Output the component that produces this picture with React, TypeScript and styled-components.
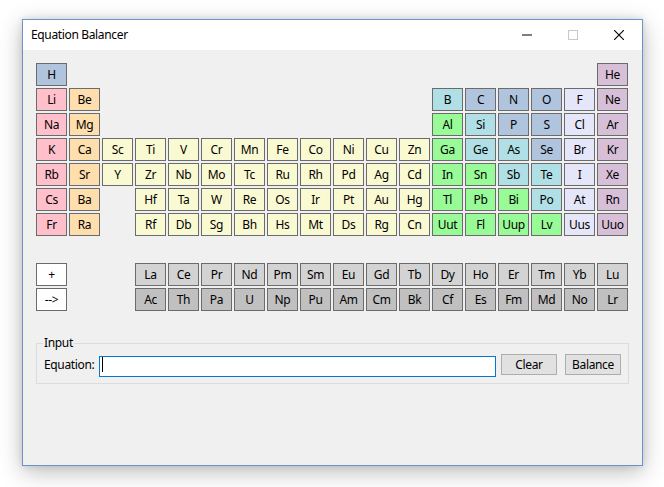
import React from "react";
import styled, { createGlobalStyle } from "styled-components";

const GlobalStyle = createGlobalStyle`
  html, body { margin: 0; padding: 0; background: #ffffff; }
  body { font-family: "Noto Sans", "Segoe UI", sans-serif; color: #000; letter-spacing: -0.35px; }
  * { box-sizing: border-box; }
`;

const Page = styled.div`
  width: 664px;
  height: 487px;
  padding: 19px 0 0 22px;
  overflow: hidden;
`;

const Window = styled.div`
  width: 621px;
  height: 447px;
  border: 1px solid #6a93c9;
  background: #f0f0f0;
  box-shadow: 0 6px 22px rgba(0, 0, 0, 0.26), 0 0 7px rgba(0, 0, 0, 0.12);
  display: flex;
  flex-direction: column;
`;

const TitleBar = styled.div`
  height: 30px;
  background: #ffffff;
  display: flex;
  align-items: center;
  padding-left: 8px;
`;

const Title = styled.div`
  flex: 1;
  font-size: 12px;
  line-height: 16px;
`;

const CaptionButton = styled.div`
  width: 46px;
  height: 30px;
  display: flex;
  align-items: center;
  justify-content: center;
`;

const Client = styled.div`
  flex: 1;
  padding: 13px 0 0 13px;
  display: flex;
  flex-direction: column;
`;

const Table = styled.div`
  display: grid;
  grid-template-columns: repeat(18, 31px);
  grid-template-rows: repeat(10, 23px);
  gap: 2px;
`;

const Cell = styled.div<{ $bg: string; $col: number; $row: number }>`
  grid-column: ${(p) => p.$col};
  grid-row: ${(p) => p.$row};
  border: 1px solid #6b6b6b;
  background: ${(p) => p.$bg};
  display: flex;
  align-items: center;
  justify-content: center;
  font-size: 12px;
  line-height: 16px;
  color: #000;
`;

const GroupBox = styled.div`
  position: relative;
  margin-top: 32px;
  width: 593px;
  height: 41px;
  border: 1px solid #dcdcdc;
  padding: 10px 0 0 7px;
`;

const GroupTitle = styled.span`
  position: absolute;
  top: -9px;
  left: 6px;
  padding: 0 1px;
  background: #f0f0f0;
  font-size: 12px;
  line-height: 16px;
`;

const Row = styled.div`
  display: flex;
  align-items: center;
`;

const Label = styled.label`
  width: 55px;
  font-size: 12px;
  line-height: 16px;
`;

const InputWrap = styled.div`
  position: relative;
  width: 397px;
  height: 21px;
`;

const TextInput = styled.input`
  width: 100%;
  height: 100%;
  border: 1px solid #0078d7;
  background: #fff;
  outline: none;
  padding: 0 2px;
  font-family: inherit;
  font-size: 12px;
  caret-color: transparent;
`;

const Caret = styled.span`
  position: absolute;
  left: 3px;
  top: 3px;
  width: 1px;
  height: 15px;
  background: #000;
  pointer-events: none;
`;

const Button = styled.button<{ $gap: number }>`
  margin-left: ${(p) => p.$gap}px;
  width: 56px;
  height: 21px;
  border: 1px solid #adadad;
  background: #e1e1e1;
  font-family: inherit;
  font-size: 12px;
  line-height: 16px;
  letter-spacing: -0.35px;
  color: #000;
  padding: 0;
`;

const C = {
  h: "#b0c4de",
  alkali: "#ffc0cb",
  earth: "#ffdead",
  trans: "#fafad2",
  metalloid: "#b0e0e6",
  nonmetal: "#b0c4de",
  halogen: "#e6e6fa",
  noble: "#d8bfd8",
  post: "#98fb98",
  lan: "#d3d3d3",
  act: "#c0c0c0",
  op: "#ffffff",
};

type El = [string, number, number, string];

const els: El[] = [];

const add = (row: number, startCol: number, list: [string, string][]) => {
  list.forEach(([s, c], i) => els.push([s, startCol + i, row, c]));
};

add(1, 1, [["H", C.h]]);
add(1, 18, [["He", C.noble]]);
add(2, 1, [["Li", C.alkali], ["Be", C.earth]]);
add(2, 13, [["B", C.metalloid], ["C", C.nonmetal], ["N", C.nonmetal], ["O", C.nonmetal], ["F", C.halogen], ["Ne", C.noble]]);
add(3, 1, [["Na", C.alkali], ["Mg", C.earth]]);
add(3, 13, [["Al", C.post], ["Si", C.metalloid], ["P", C.nonmetal], ["S", C.nonmetal], ["Cl", C.halogen], ["Ar", C.noble]]);
add(4, 1, [
  ["K", C.alkali], ["Ca", C.earth], ["Sc", C.trans], ["Ti", C.trans], ["V", C.trans], ["Cr", C.trans],
  ["Mn", C.trans], ["Fe", C.trans], ["Co", C.trans], ["Ni", C.trans], ["Cu", C.trans], ["Zn", C.trans],
  ["Ga", C.post], ["Ge", C.metalloid], ["As", C.metalloid], ["Se", C.nonmetal], ["Br", C.halogen], ["Kr", C.noble],
]);
add(5, 1, [
  ["Rb", C.alkali], ["Sr", C.earth], ["Y", C.trans], ["Zr", C.trans], ["Nb", C.trans], ["Mo", C.trans],
  ["Tc", C.trans], ["Ru", C.trans], ["Rh", C.trans], ["Pd", C.trans], ["Ag", C.trans], ["Cd", C.trans],
  ["In", C.post], ["Sn", C.post], ["Sb", C.metalloid], ["Te", C.metalloid], ["I", C.halogen], ["Xe", C.noble],
]);
add(6, 1, [["Cs", C.alkali], ["Ba", C.earth]]);
add(6, 4, [
  ["Hf", C.trans], ["Ta", C.trans], ["W", C.trans], ["Re", C.trans], ["Os", C.trans], ["Ir", C.trans],
  ["Pt", C.trans], ["Au", C.trans], ["Hg", C.trans], ["Tl", C.post], ["Pb", C.post], ["Bi", C.post],
  ["Po", C.metalloid], ["At", C.halogen], ["Rn", C.noble],
]);
add(7, 1, [["Fr", C.alkali], ["Ra", C.earth]]);
add(7, 4, [
  ["Rf", C.trans], ["Db", C.trans], ["Sg", C.trans], ["Bh", C.trans], ["Hs", C.trans], ["Mt", C.trans],
  ["Ds", C.trans], ["Rg", C.trans], ["Cn", C.trans], ["Uut", C.post], ["Fl", C.post], ["Uup", C.post],
  ["Lv", C.post], ["Uus", C.halogen], ["Uuo", C.noble],
]);
add(9, 1, [["+", C.op]]);
add(9, 4, ["La", "Ce", "Pr", "Nd", "Pm", "Sm", "Eu", "Gd", "Tb", "Dy", "Ho", "Er", "Tm", "Yb", "Lu"].map((s) => [s, C.lan] as [string, string]));
add(10, 1, [["-->", C.op]]);
add(10, 4, ["Ac", "Th", "Pa", "U", "Np", "Pu", "Am", "Cm", "Bk", "Cf", "Es", "Fm", "Md", "No", "Lr"].map((s) => [s, C.act] as [string, string]));

const MinIcon = () => (
  <svg width="10" height="10" viewBox="0 0 10 10">
    <rect x="0" y="4.5" width="10" height="1" fill="#000" />
  </svg>
);
const MaxIcon = () => (
  <svg width="10" height="10" viewBox="0 0 10 10">
    <rect x="0.5" y="0.5" width="9" height="9" fill="none" stroke="#c8c8c8" strokeWidth="1" />
  </svg>
);
const CloseIcon = () => (
  <svg width="10" height="10" viewBox="0 0 10 10">
    <path d="M0 0 L10 10 M10 0 L0 10" stroke="#000" strokeWidth="1.1" fill="none" />
  </svg>
);

export default function App() {
  return (
    <Page>
      <GlobalStyle />
      <Window>
        <TitleBar>
          <Title>Equation Balancer</Title>
          <CaptionButton><MinIcon /></CaptionButton>
          <CaptionButton><MaxIcon /></CaptionButton>
          <CaptionButton><CloseIcon /></CaptionButton>
        </TitleBar>
        <Client>
          <Table>
            {els.map(([s, col, row, bg]) => (
              <Cell key={s} $bg={bg} $col={col} $row={row}>{s}</Cell>
            ))}
          </Table>
          <GroupBox>
            <GroupTitle>Input</GroupTitle>
            <Row>
              <Label htmlFor="eq">Equation:</Label>
              <InputWrap>
                <TextInput id="eq" defaultValue="" />
                <Caret />
              </InputWrap>
              <Button $gap={5}>Clear</Button>
              <Button $gap={8}>Balance</Button>
            </Row>
          </GroupBox>
        </Client>
      </Window>
    </Page>
  );
}
